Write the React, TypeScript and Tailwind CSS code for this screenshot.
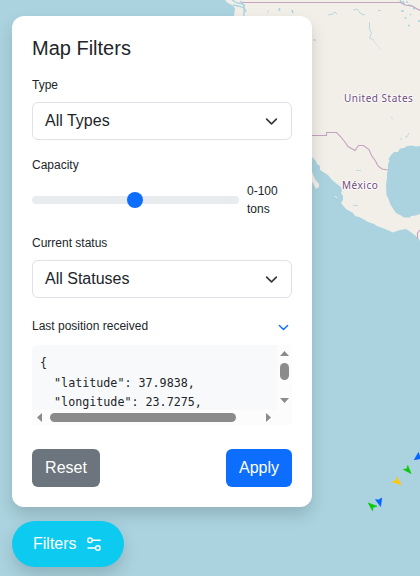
import React from "react";

const labelClass = "text-[12px] leading-[18px]";

function Chevron({ size = 13, width = 2 }: { size?: number; width?: number }) {
  return (
    <svg width={size} height={size} viewBox="0 0 16 16" fill="none" stroke="currentColor" strokeWidth={width} strokeLinecap="round" strokeLinejoin="round">
      <path d="m2 5 6 6 6-6" />
    </svg>
  );
}

function Select({ value }: { value: string }) {
  return (
    <button className="mt-2 flex h-[38px] w-full items-center justify-between rounded-md border border-[#dee2e6] bg-white px-3 text-left text-[16px] leading-6 text-[#212529]">
      <span>{value}</span>
      <span className="mr-[1.5px] text-[#343a40]"><Chevron /></span>
    </button>
  );
}

function WorldMap() {
  return (
    <svg className="absolute inset-0" width="420" height="576" viewBox="0 0 420 576">
      <rect width="420" height="576" fill="#aad3df" />
      <path
        fill="#f2efe9"
        d="M225 0L228 3 232 5 235 8 234 16 240 60 270 120 300 145 312 157 316 161 317 164 320 166 320 170 328 175 332 180 337 184 341 187 342 191 341 193 343 196 343 200 341 203 346 209 353 213 355 216 359 217 363 219 368 222 374 224 377 226 385 229 393 232.500 397 231 400 230 406 229 412 233 418 238 420 241V214L416 215.500 411 216 410 217.500 404 217.500 400 215 396 213 394 210 390 204 389 200 386.500 195 386 185 387 178 387 173 388 171 388 164 389.500 161 388.500 159 391 155 394 152 398 152 400 148.500 404 148 407 146 412 145.500 416 146.500 420 146V0Z"
      />
      <path fill="#f2efe9" d="M305 160L312 172 315 179 319 184 319 187 316 189 313 183 308 178Z" />
      <g fill="none" stroke="#aad3df" strokeWidth="1">
        <path d="M232 0l5 3 6 1 1 3 2 5M233 5l5 1 6 2v8M240 1l5 5" strokeWidth="1.300" />
        <path d="M328 15l5-1 2-2 2 2M353 10l4-1 4 5 4 1M378 10.500h3M369.500 22v7l2 4-2 5 4 2" strokeOpacity=".8" />
        <path d="M373 40l3 4 5 6" strokeOpacity=".4" />
        <path d="M400 0l2 4M403 1l1 3M406 2h2M401 11h3M408 5l4 1M413 8l2 1M405 17l1 2M410 14l1 1M408 25.500h2M418 21h2M279.500 8v3M292 10l1 3M313.500 40h2" strokeWidth="1.500" />
        <path d="M356 170.500h5M353 205.500h5M400 139h2M405 137h2l2-4M391 117l2 2M269 10l-2 3" strokeOpacity=".7" />
        <path d="M335 196l2 2" stroke="#f2efe9" />
      </g>
      <g fill="none" stroke="#c4a3c0" strokeWidth="1.100">
        <path d="M242 2.500H401L405 5l7 1 8 4.500M312 135.500h14.500v-3h10l4 4 4 5 3.500 5 7 4 3.500-5h5l5.500 4 2.500 6 4 5.500 2.500 5 4 3 6.500 1" />
        <path d="M420 230l-2.500 3v6" />
      </g>
      <g strokeWidth="0.700" strokeLinejoin="round">
        <path fill="#0bc80b" stroke="#0bc80b" d="M368.300 503L377 506.300 373 507.300 372.500 510.700Z" />
        <path fill="#0564ff" stroke="#0564ff" d="M375.500 499.500L378.500 500 381.700 498 380.600 506.500Z" />
        <path fill="#ffc60a" stroke="#ffc60a" d="M392.400 481.800L396.300 480.500 396.700 477.300 401.200 484.700Z" />
        <path fill="#0bc80b" stroke="#0bc80b" d="M403.400 469.500L407 468.800 407.700 465.500 411 473.500Z" />
        <path fill="#0564ff" stroke="#0564ff" d="M414.300 459.700L418.500 452.500 419.500 456 424 458Z" />
      </g>
    </svg>
  );
}

const halo = "[text-shadow:0_0_2px_#fff,1px_0_1px_#fff,-1px_0_1px_#fff,0_1px_1px_#fff,0_-1px_1px_#fff]";

export default function App() {
  return (
    <div className="relative h-[576px] w-[420px] overflow-hidden bg-[#aad3df] pt-4 pl-3 font-['Liberation_Sans',Arial,sans-serif] text-[#212529]">
      <WorldMap />
      <span className={`absolute top-[90px] left-[344px] font-['Noto_Sans',sans-serif] text-[10px] leading-4 tracking-[0.5px] whitespace-nowrap text-[#714a7b] ${halo}`}>United States</span>
      <span className={`absolute top-[177px] left-[342px] font-['Noto_Sans',sans-serif] text-[10px] leading-4 tracking-[0.5px] whitespace-nowrap text-[#714a7b] ${halo}`}>México</span>

      <section className="relative h-[491px] w-[300px] rounded-xl bg-white p-5 shadow-[0_8px_16px_rgba(0,0,0,0.15)]">
        <h5 className="mb-4 text-[20px] leading-6">Map Filters</h5>
        <div className="mb-4">
          <p className={labelClass}>Type</p>
          <Select value="All Types" />
        </div>
        <div className="mb-4">
          <p className={labelClass}>Capacity</p>
          <div className="mt-2 flex items-center">
            <div className="flex h-2 w-[207px] items-center rounded-full bg-[#e9ecef]">
              <div className="ml-[95px] size-4 rounded-full bg-[#0d6efd]" />
            </div>
            <p className="ml-2 w-[45px] text-[12px] leading-[18px]">0-100 tons</p>
          </div>
        </div>
        <div className="mb-4">
          <p className={labelClass}>Current status</p>
          <Select value="All Statuses" />
        </div>
        <div className="flex h-6 items-center justify-between">
          <p className={labelClass}>Last position received</p>
          <span className="mt-[2px] mr-[3px] text-[#0d6efd]"><Chevron size={11} /></span>
        </div>
        <div className="mt-[7px] grid h-20 grid-cols-[245px_15px] grid-rows-[65px_15px] overflow-hidden rounded-tl-md bg-[#fcfcfc]">
          <pre className="overflow-hidden bg-[#f8f9fa] px-2 pt-[9px] font-['DejaVu_Sans_Mono',monospace] text-[11.7px] leading-[19.5px]">{`{
  "latitude": 37.9838,
  "longitude": 23.7275,`}</pre>
          <div className="flex flex-col items-center pt-[6px] text-[#8b8b8b]">
            <svg width="9" height="5" fill="currentColor"><path d="M0 5 4.500 0 9 5Z" /></svg>
            <div className="mt-[7px] h-[17px] w-[9px] rounded-full bg-[#8b8b8b]" />
            <svg className="mt-[18px]" width="9" height="5" fill="currentColor"><path d="M0 0h9L4.500 5Z" /></svg>
          </div>
          <div className="flex items-center pl-[5px] text-[#8b8b8b]">
            <svg width="5" height="9" fill="currentColor"><path d="M5 0v9L0 4.500Z" /></svg>
            <div className="ml-2 h-[9px] w-[186px] rounded-full bg-[#8b8b8b]" />
            <svg className="ml-[30px]" width="5" height="9" fill="currentColor"><path d="M0 0v9l5-4.500Z" /></svg>
          </div>
        </div>
        <div className="mt-6 flex justify-between text-[16px] leading-6 text-white">
          <button className="h-[38px] w-[68px] rounded-md bg-[#6c757d]">Reset</button>
          <button className="h-[38px] w-[66px] rounded-md bg-[#0d6efd]">Apply</button>
        </div>
      </section>

      <button className="relative mt-[14px] flex h-[46px] w-[112px] items-center rounded-full bg-[#0dcaf0] pl-[21px] text-[16px] leading-6 text-white shadow-[0_8px_16px_rgba(0,0,0,0.15)]">
        <span>Filters</span>
        <svg className="ml-[9.5px]" width="16" height="16" viewBox="0 0 16 16" fill="none" stroke="currentColor" strokeWidth="1.400" strokeLinecap="round">
          <circle cx="4" cy="4.200" r="2.300" />
          <path d="M6.500 4.200H14.300M2 12h7" />
          <circle cx="11.800" cy="12" r="2.300" />
        </svg>
      </button>
    </div>
  );
}
